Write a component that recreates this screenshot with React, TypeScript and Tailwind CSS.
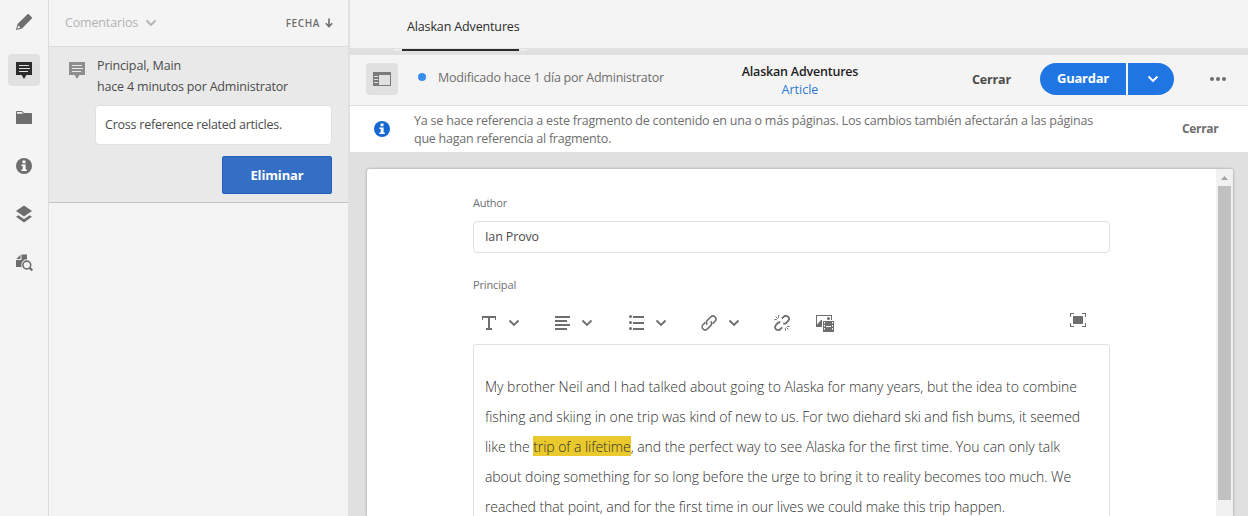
import type { ReactNode, SVGProps } from "react";

function Svg({ w, h, children, className = "", ...rest }: { w: number; h: number; children: ReactNode } & SVGProps<SVGSVGElement>) {
  return (
    <svg width={w} height={h} viewBox={`0 0 ${w} ${h}`} fill="currentColor" className={`block shrink-0 ${className}`} {...rest}>
      {children}
    </svg>
  );
}

const PencilIcon = () => (
  <Svg w={18} h={18}>
    <path d="M2.6 11 12.200 1.400c.6-.6 1.200-.6 1.800 0l2.600 2.600c.6.6.6 1.200 0 1.800L7 15.400 1.200 17c-.2 0-.3-.1-.2-.3zM3.400 12.600 2.200 15.800 5.400 14.600z" fillRule="evenodd" />
  </Svg>
);

const CommentIcon = ({ line }: { line: string }) => (
  <Svg w={16} h={17}>
    <path d="M0 0h16v13h-5.6L8 17l-2.4-4H0z" />
    <path d="M3 3.5h10M3 6.5h11M3 9.5h9" stroke={line} strokeWidth="1" fill="none" />
  </Svg>
);

const FolderIcon = () => (
  <Svg w={16} h={13} className="mb-[1px]">
    <path d="M0 13V1.200C0 .5.5 0 1.200 0H6l2 2h7.200c.5 0 .8.3.8.8V13zM1 1v1.800h6.300L5.600 1z" fillRule="evenodd" />
  </Svg>
);

const InfoIcon = () => (
  <Svg w={16} h={16}>
    <circle cx="8" cy="8" r="8" />
    <path d="M6.500 2.600h3v2.600h-3zM5.400 6.400h4.200v5h1.200v1.700H5.400v-1.700h1.300V8.100H5.400z" fill="white" />
  </Svg>
);

const LayersIcon = () => (
  <Svg w={16} h={18}>
    <path d="M8 .5 16 6 8 11.500 0 6z" />
    <path d="M2.300 10.200 8 14l5.700-3.800L16 11.700 8 17.400 0 11.700z" />
  </Svg>
);

const FileSearchIcon = () => (
  <Svg w={18} h={18} className="ml-[2px] mt-[1px]">
    <path d="M5.500.5H11v4.800A5.700 5.700 0 0 0 5.600 13H0V6h5.500zM4.500.800V5H.300z" />
    <circle cx="10.800" cy="11" r="3.900" fill="none" stroke="currentColor" strokeWidth="1.600" />
    <path d="m13.600 13.800 2.700 2.700" stroke="currentColor" strokeWidth="2.300" />
  </Svg>
);

const Chevron = ({ className = "" }: { className?: string }) => (
  <Svg w={12} h={8} className={className}>
    <path d="m1.500 1.500 4.500 4.500 4.500-4.500" fill="none" stroke="currentColor" strokeWidth="1.900" />
  </Svg>
);

const ArrowDown = () => (
  <Svg w={8} h={10}>
    <path d="M4 .5v8M.8 5.300 4 8.500l3.200-3.200" fill="none" stroke="currentColor" strokeWidth="1.600" />
  </Svg>
);

const PanelIcon = () => (
  <Svg w={18} h={14} shapeRendering="crispEdges">
    <path d="M0 0h18v14H0zM6 3v10h11V3zM1 4v1h4V4zM1 7v1h4V7zM1 10v1h4v-1z" fillRule="evenodd" />
  </Svg>
);

const TextIcon = () => (
  <Svg w={14} h={14} shapeRendering="crispEdges">
    <path d="M0 0h14v4h-1V2H8v10h2v2H4v-2h2V2H1v2H0z" />
  </Svg>
);

const AlignIcon = () => (
  <Svg w={15} h={14} shapeRendering="crispEdges">
    <path d="M0 0h15v2H0zM0 4h12v2H0zM0 8h15v2H0zM0 12h12v2H0z" />
  </Svg>
);

const ListIcon = () => (
  <Svg w={15} h={15} className="-mt-px">
    <path d="M4 1h11v2H4zM4 7h11v2H4zM4 13h11v2H4z" />
    <circle cx="1.500" cy="1.500" r="1.500" />
    <circle cx="1.500" cy="7.500" r="1.500" />
    <circle cx="1.500" cy="13.500" r="1.500" />
  </Svg>
);

const LinkIcon = () => (
  <Svg w={16} h={16}>
    <g fill="none" stroke="currentColor" strokeWidth="1.600">
      <path d="M6.300 9.700a3 3 0 0 1 0-4.300L9.700 2a3 3 0 0 1 4.300 4.300l-2.300 2.300" />
      <path d="M9.700 6.300a3 3 0 0 1 0 4.300L6.300 14A3 3 0 0 1 2 9.700l2.300-2.300" />
    </g>
  </Svg>
);

const UnlinkIcon = () => (
  <Svg w={16} h={16}>
    <g fill="none" stroke="currentColor" strokeWidth="1.800">
      <path d="M7.800 3.600 9.600 1.900A3 3 0 0 1 14.100 6L11.900 8.200Q10.700 9 9.200 8.500" />
      <path d="M8.200 12.400 6.400 14.100A3 3 0 0 1 1.900 10L4.100 7.800Q5.200 7 6.400 7.400" />
    </g>
    <path d="M4.600.3v2.500M.3 4.600h2.500M1.600 1.600l2 2M11.400 15.700v-2.500M15.700 11.400h-2.500M14.400 14.400l-2-2" fill="none" stroke="currentColor" strokeWidth="1" />
  </Svg>
);

const MediaIcon = () => (
  <Svg w={18} h={17}>
    <path d="M0 0h16v5h-1V1H1v8.500l4-4.500h1v7H0zM11 3.500a1.500 1.500 0 1 1 3 0 1.500 1.500 0 0 1-3 0z" />
    <path d="M7 6h11v11H7zM8 7v1.500h1V7zM8 10v1.500h1V10zM8 13v1.500h1V13zM16 7v1.500h1V7zM16 10v1.500h1V10zM16 13v1.500h1V13zM10 11v1h5v-1z" fillRule="evenodd" />
  </Svg>
);

const FullscreenIcon = () => (
  <Svg w={16} h={14} shapeRendering="crispEdges">
    <path d="M3 3h10v8H3zM0 0h4v1H1v3H0zM12 0h4v4h-1V1h-3zM0 10h1v3h3v1H0zM15 10h1v4h-4v-1h3z" />
  </Svg>
);

function RailItem({ children, active = false }: { children: ReactNode; active?: boolean }) {
  return (
    <button className={`flex h-8 w-8 items-center justify-center rounded-[4px] ${active ? "bg-[#e1e1e1] text-[#2c2c2c]" : "text-[#6e6e6e]"}`}>
      {children}
    </button>
  );
}

function Rail() {
  return (
    <nav className="flex w-[49px] shrink-0 flex-col items-center gap-4 border-r border-[#dcdcdc] bg-[#f4f4f4] pt-[6px]">
      <RailItem><PencilIcon /></RailItem>
      <RailItem active><CommentIcon line="#e1e1e1" /></RailItem>
      <RailItem><FolderIcon /></RailItem>
      <RailItem><InfoIcon /></RailItem>
      <RailItem><LayersIcon /></RailItem>
      <RailItem><FileSearchIcon /></RailItem>
    </nav>
  );
}

function CommentsPanel() {
  return (
    <aside className="flex w-[301px] shrink-0 flex-col border-r-2 border-[#e0e0e0] bg-[#f4f4f4]">
      <header className="flex h-[47px] items-center justify-between border-b border-[#dcdcdc] pr-[15px] pl-4">
        <div className="flex items-center gap-[7px] text-[#b3b3b3]">
          <span className="tracking-[-0.16px]">Comentarios</span>
          <Chevron className="-mt-px" />
        </div>
        <div className="flex items-center gap-[5px] text-[#6e6e6e]">
          <span className="text-[10px] font-semibold tracking-[0.6px]">FECHA</span>
          <ArrowDown />
        </div>
      </header>
      <section className="h-[156px] border-b border-[#c4c4c4] bg-[#e9e9e9] pr-4 pl-5">
        <div className="flex gap-3 pt-2">
          <div className="pt-[7px] text-[#8e8e8e]"><CommentIcon line="#e9e9e9" /></div>
          <div className="leading-[21px] text-[#4b4b4b]">
            <p className="tracking-[-0.12px]">Principal, Main</p>
            <p className="tracking-[-0.178px]">hace 4 minutos por Administrator</p>
          </div>
        </div>
        <div className="mt-2 ml-[26px] flex h-10 items-center rounded-[4px] border border-[#e1e1e1] bg-white pl-[9px] tracking-[-0.235px] text-[#4b4b4b]">
          Cross reference related articles.
        </div>
        <div className="mt-[11px] flex justify-end">
          <button className="h-[38px] w-[110px] rounded-[2px] border border-[#2160bd] bg-[#356fc5] pt-px text-[13px] font-bold tracking-[-0.15px] text-white">
            Eliminar
          </button>
        </div>
      </section>
    </aside>
  );
}

function TabBar() {
  return (
    <div className="h-[55px] shrink-0 border-b-[4px] border-[#e0e0e0] bg-[linear-gradient(#f4f4f4_48px,#e0e0e0_48px)] pl-11">
      <div className="flex h-[51px] w-[133px] flex-col">
        <div className="flex h-[49px] items-center pt-[5px] pl-[13px] tracking-[-0.14px] whitespace-nowrap text-[#2c2c2c]">Alaskan Adventures</div>
        <div className="h-[2px] bg-[#ebebeb] px-2">
          <div className="h-full bg-[#2c2c2c]" />
        </div>
      </div>
    </div>
  );
}

function Toolbar() {
  return (
    <div className="flex h-[51px] shrink-0 items-center border-b border-[#dcdcdc] bg-[#f4f4f4] pl-4">
      <button className="mb-[2px] flex h-8 w-8 items-center justify-center rounded-[4px] bg-[#e1e1e1] text-[#7a7a7a]"><PanelIcon /></button>
      <span className="mb-[6px] ml-5 h-2 w-2 rounded-full bg-[#378ef0]" />
      <span className="mb-[3px] ml-3 w-[303px] tracking-[-0.223px] text-[#6e6e6e]">Modificado hace 1 día por Administrator</span>
      <div className="w-[118px] pt-[2px] text-center leading-[18px] whitespace-nowrap">
        <div className="font-semibold tracking-[-0.2px] text-[#1e1e1e]">Alaskan Adventures</div>
        <div className="text-[#2b79d3]">Article</div>
      </div>
      <span className="ml-[113px] w-[68px] font-bold tracking-[-0.15px] text-[#4b4b4b]">Cerrar</span>
      <button className="mb-[2px] h-8 w-[86px] rounded-l-full bg-[#1f76e3] text-[13px] font-bold tracking-[-0.24px] text-white">Guardar</button>
      <button className="mb-[2px] ml-[2px] flex h-8 w-[46px] items-center justify-center rounded-r-full bg-[#1f76e3] pl-1 text-white"><Chevron /></button>
      <div className="mb-[2px] ml-9 flex gap-[2px]">
        <span className="h-1 w-1 rounded-full bg-[#6e6e6e]" />
        <span className="h-1 w-1 rounded-full bg-[#6e6e6e]" />
        <span className="h-1 w-1 rounded-full bg-[#6e6e6e]" />
      </div>
    </div>
  );
}

function Notice() {
  return (
    <div className="flex h-[46px] shrink-0 bg-white pl-6 whitespace-nowrap text-[#6e6e6e]">
      <div className="pt-[15px] text-[#1568d3]"><InfoIcon /></div>
      <div className="ml-6 w-[768px] pt-[6px] leading-[18px]">
        <p className="tracking-[-0.202px]">Ya se hace referencia a este fragmento de contenido en una o más páginas. Los cambios también afectarán a las páginas</p>
        <p className="tracking-[-0.24px]">que hagan referencia al fragmento.</p>
      </div>
      <span className="pt-[14px] text-[12px] leading-[18px] font-bold tracking-[-0.35px]">Cerrar</span>
    </div>
  );
}

function EditorToolbar() {
  return (
    <div className="flex h-[14px] shrink-0 items-center pl-[9px] text-[#6e6e6e]">
      <TextIcon /><Chevron className="-mt-px ml-3" />
      <span className="w-[35px]" /><AlignIcon /><Chevron className="-mt-px ml-[11px]" />
      <span className="w-9" /><ListIcon /><Chevron className="-mt-px ml-[11px]" />
      <span className="w-[34px]" /><LinkIcon /><Chevron className="-mt-px ml-[11px]" />
      <span className="w-[34px]" /><UnlinkIcon />
      <span className="w-[26px]" /><MediaIcon />
      <span className="mb-[6px] ml-[236px]"><FullscreenIcon /></span>
    </div>
  );
}

function ContentForm() {
  return (
    <div className="flex min-h-0 flex-1 bg-[#e0e0e0] pt-[17px] pr-[15px] pl-[17px]">
      <div className="flex w-[866px] rounded-t-[3px] bg-white shadow-[0_0_3px_rgba(0,0,0,0.35)]">
        <div className="flex min-h-0 flex-1 flex-col pl-[106px]">
          <div className="mt-[26px] h-4 shrink-0 text-[11px] leading-4 tracking-[-0.25px] text-[#6e6e6e]">Author</div>
          <div className="mt-[10px] flex h-8 w-[637px] shrink-0 items-center rounded-[4px] border border-[#e1e1e1] pt-px pl-[11px] tracking-[-0.14px] text-[#4b4b4b]">Ian Provo</div>
          <div className="mt-6 mb-[23px] h-4 shrink-0 text-[11px] leading-4 tracking-[-0.14px] text-[#6e6e6e]">Principal</div>
          <EditorToolbar />
          <div className="mt-[14px] h-[180px] w-[637px] shrink-0 rounded-t-[4px] border border-b-0 border-[#e1e1e1] pt-[27px] pl-[11px] text-[14px] leading-[30px] font-light whitespace-nowrap text-[#323232]">
            <p className="tracking-[-0.026px]">My brother Neil and I had talked about going to Alaska for many years, but the idea to combine</p>
            <p className="tracking-[-0.068px]">fishing and skiing in one trip was kind of new to us. For two diehard ski and fish bums, it seemed</p>
            <p className="tracking-[-0.056px]">like the <mark className="bg-[#e9c92b] pt-px text-[#323232]">trip of a lifetime</mark>, and the perfect way to see Alaska for the first time. You can only talk</p>
            <p className="tracking-[-0.07px]">about doing something for so long before the urge to bring it to reality becomes too much. We</p>
            <p className="tracking-[-0.09px]">reached that point, and for the first time in our lives we could make this trip happen.</p>
          </div>
        </div>
        <div className="flex w-[17px] flex-col items-center rounded-tr-[3px] bg-[#f1f1f1]">
          <div className="flex h-[17px] items-center text-[#a3a3a3]">
            <Svg w={7} h={4}><path d="M3.500 0 7 4H0z" /></Svg>
          </div>
          <div className="h-[314px] w-[13px] bg-[#c1c1c1]" />
        </div>
      </div>
    </div>
  );
}

export default function App() {
  return (
    <div className="flex h-[516px] w-[1248px] overflow-hidden bg-[#e0e0e0] font-['Open_Sans','Noto_Sans',sans-serif] text-[12.5px]">
      <Rail />
      <CommentsPanel />
      <main className="flex min-w-0 flex-1 flex-col">
        <TabBar />
        <Toolbar />
        <Notice />
        <ContentForm />
      </main>
    </div>
  );
}
